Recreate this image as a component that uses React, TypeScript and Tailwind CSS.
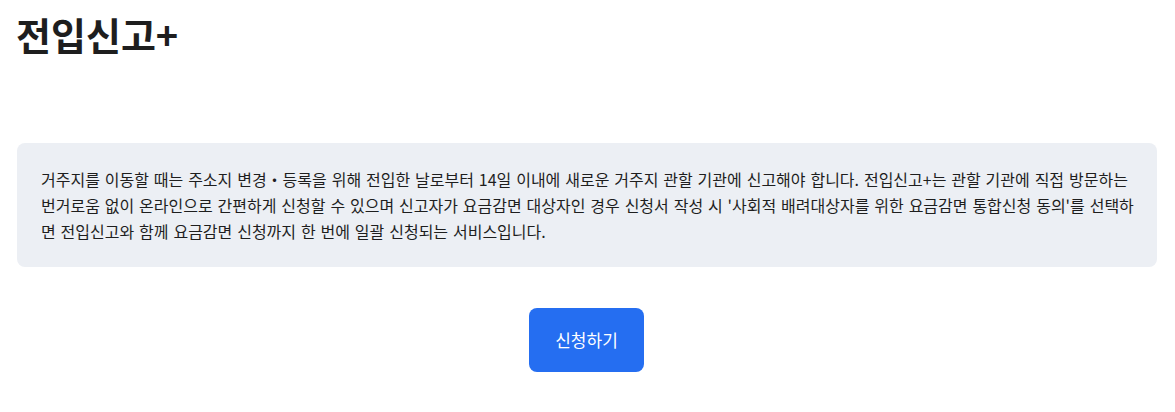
import React from "react";

export default function App() {
  return (
    <div
      className="w-[1175px] h-[412px] bg-white px-4 pt-[12px] text-[#1e1e1e]"
      style={{ fontFamily: '"Noto Sans CJK KR", "Noto Sans", sans-serif' }}
    >
      <h1 className="text-[38px] leading-[44px] font-bold text-[#1e1e1e]">전입신고+</h1>
      <div className="mt-[87px] ml-px mr-[2px] rounded-lg bg-[#eceff4] pl-6 pr-[18px] pt-[23px] pb-[23px] text-[16px] leading-[26px] [word-spacing:1.3px] text-[#1e1e1e]">
        거주지를 이동할 때는 주소지 변경・등록을 위해 전입한 날로부터 14일 이내에 새로운 거주지 관할 기관에 신고해야 합니다. 전입신고+는 관할 기관에 직접 방문하는 번거로움 없이 온라인으로 간편하게 신청할 수 있으며 신고자가 요금감면 대상자인 경우 신청서 작성 시 '사회적 배려대상자를 위한 요금감면 통합신청 동의'를 선택하면 전입신고와 함께 요금감면 신청까지 한 번에 일괄 신청되는 서비스입니다.
      </div>
      <div className="mt-[41px] flex justify-center">
        <button className="h-16 w-[115px] -translate-x-px rounded-lg bg-[#256ef1] text-[17px] text-white">신청하기</button>
      </div>
    </div>
  );
}
